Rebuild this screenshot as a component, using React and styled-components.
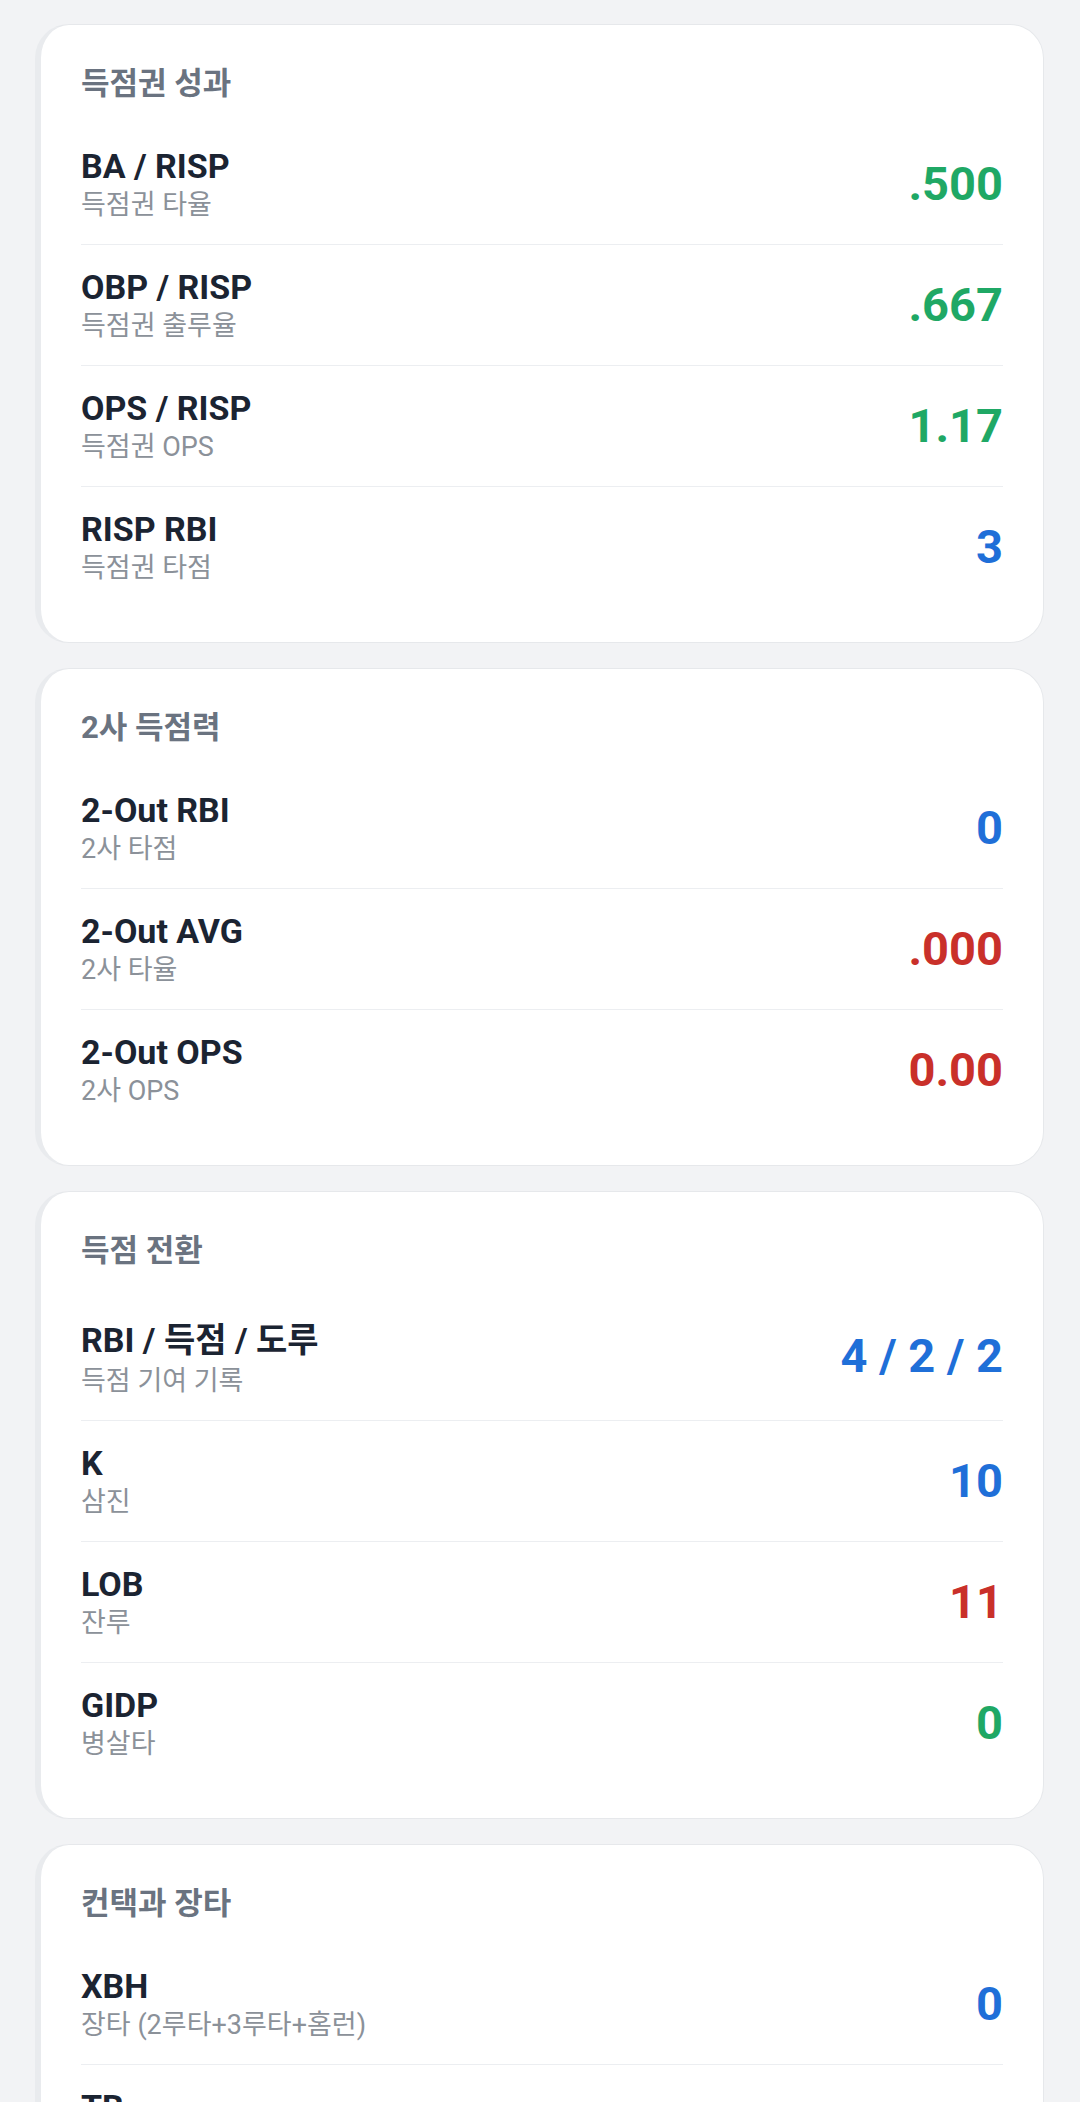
import React from "react";
import styled, { createGlobalStyle } from "styled-components";

const GlobalStyle = createGlobalStyle`
  html, body {
    margin: 0;
    padding: 0;
    background: #f2f3f5;
  }
  body {
    font-family: Roboto, "Noto Sans CJK KR", sans-serif;
    -webkit-font-smoothing: antialiased;
  }
`;

const Page = styled.main`
  display: flex;
  flex-direction: column;
  gap: 25px;
  padding: 24px 36px 40px 35px;
  background: #f2f3f5;
  min-height: 2102px;
  box-sizing: border-box;
`;

const Card = styled.section`
  background: #ffffff;
  border: 1px solid #e6e8eb;
  border-left: 6px solid #e9ebee;
  border-radius: 34px;
  padding: 40px 40px 34px 40px;
`;

const CardTitle = styled.h2`
  margin: 0 0 21px 0;
  font-family: Roboto, "Noto Sans CJK KR", sans-serif;
  font-size: 31px;
  line-height: 38px;
  font-weight: 700;
  color: #6a7380;
`;

const List = styled.div`
  display: flex;
  flex-direction: column;
`;

const Row = styled.div`
  display: flex;
  align-items: center;
  justify-content: space-between;
  padding: 22px 0 22px 0;
  border-bottom: 1px solid #eceef1;
  &:last-child {
    border-bottom: none;
    padding-bottom: 23px;
  }
`;

const TextCol = styled.div`
  display: flex;
  flex-direction: column;
  gap: 3px;
`;

const Label = styled.div`
  font-size: 34px;
  line-height: normal;
  min-height: 40px;
  font-weight: 700;
  color: #1b2432;
`;

const SubLabel = styled.div`
  font-size: 27px;
  line-height: 33px;
  font-weight: 400;
  color: #8b9199;
`;

const COLORS = {
  green: "#1fa865",
  blue: "#1f6fd8",
  red: "#c9302a",
};

const Value = styled.div`
  font-size: 47px;
  line-height: 56px;
  font-weight: 700;
  color: ${(p) => COLORS[p.$tone] || "#1b2432"};
  white-space: nowrap;
`;

const sections = [
  {
    title: "득점권 성과",
    rows: [
      { label: "BA / RISP", sub: "득점권 타율", value: ".500", tone: "green" },
      { label: "OBP / RISP", sub: "득점권 출루율", value: ".667", tone: "green" },
      { label: "OPS / RISP", sub: "득점권 OPS", value: "1.17", tone: "green" },
      { label: "RISP RBI", sub: "득점권 타점", value: "3", tone: "blue" },
    ],
  },
  {
    title: "2사 득점력",
    rows: [
      { label: "2-Out RBI", sub: "2사 타점", value: "0", tone: "blue" },
      { label: "2-Out AVG", sub: "2사 타율", value: ".000", tone: "red" },
      { label: "2-Out OPS", sub: "2사 OPS", value: "0.00", tone: "red" },
    ],
  },
  {
    title: "득점 전환",
    rows: [
      { label: "RBI / 득점 / 도루", sub: "득점 기여 기록", value: "4 / 2 / 2", tone: "blue" },
      { label: "K", sub: "삼진", value: "10", tone: "blue" },
      { label: "LOB", sub: "잔루", value: "11", tone: "red" },
      { label: "GIDP", sub: "병살타", value: "0", tone: "green" },
    ],
  },
  {
    title: "컨택과 장타",
    rows: [
      { label: "XBH", sub: "장타 (2루타+3루타+홈런)", value: "0", tone: "blue" },
      { label: "TB", sub: "루타", value: "4", tone: "blue" },
      { label: "SO%", sub: "삼진 비율", value: "26.3%", tone: "red" },
    ],
  },
];

export default function App() {
  return (
    <>
      <GlobalStyle />
      <Page>
        {sections.map((s) => (
          <Card key={s.title}>
            <CardTitle>{s.title}</CardTitle>
            <List>
              {s.rows.map((r) => (
                <Row key={r.label}>
                  <TextCol>
                    <Label>{r.label}</Label>
                    <SubLabel>{r.sub}</SubLabel>
                  </TextCol>
                  <Value $tone={r.tone}>{r.value}</Value>
                </Row>
              ))}
            </List>
          </Card>
        ))}
      </Page>
    </>
  );
}
